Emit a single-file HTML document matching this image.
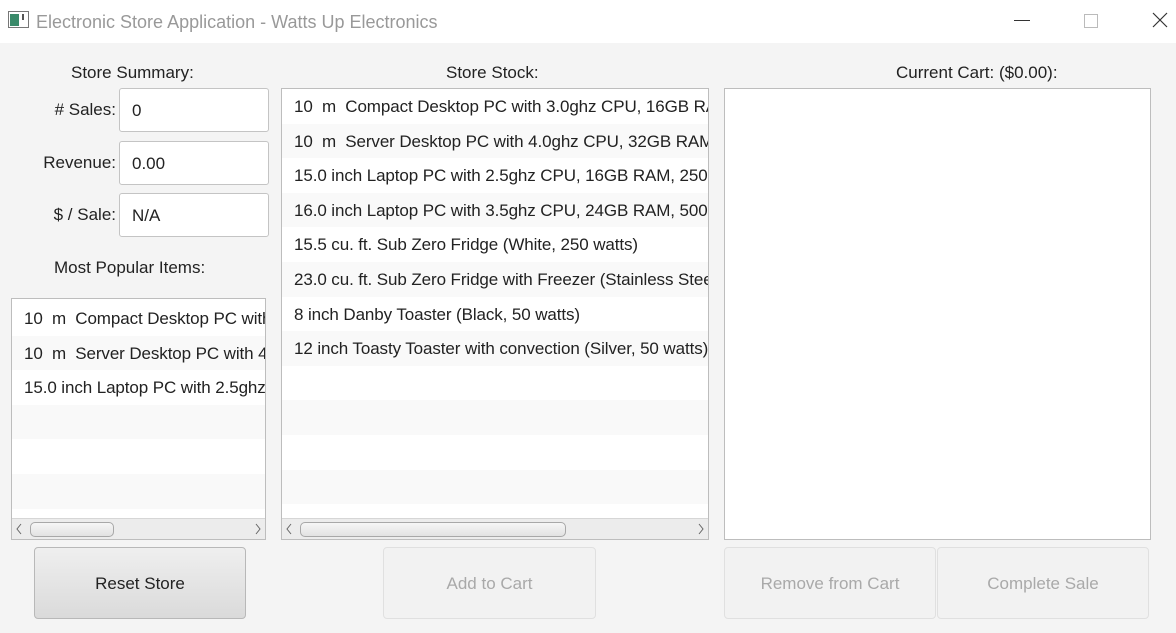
<!DOCTYPE html><html><head><style>
body{margin:0;width:1176px;height:633px;background:#f4f4f4;font-family:"Liberation Sans",sans-serif;font-size:17px;color:#222;position:relative;overflow:hidden}
.a{position:absolute}
.tb{left:0;top:0;width:1176px;height:43px;background:#fff}
.lbl{text-align:right;width:116px;left:0}
.tf{background:#fff;border:1px solid #c4c4c4;border-radius:3px;width:150px;height:44px;left:119px;box-sizing:border-box;padding:12px 0 0 12px}
.list{background:#fff;border:1px solid #bdbdbd;box-sizing:border-box;overflow:hidden}
.row{height:34.6px;line-height:36px;padding-left:12px;white-space:nowrap;letter-spacing:-0.1px}
.row:nth-child(even){background:#f9f9f9}
.sb{position:absolute;left:0;right:0;bottom:0;height:20px;background:#ececec;border-top:1px solid #d6d6d6}
.thumb{position:absolute;top:3px;height:13px;border:1px solid #a8a8a8;border-radius:5px;background:linear-gradient(#f6f6f6,#e2e2e2)}
.btn{border:1px solid #b8b8b8;border-radius:4px;box-sizing:border-box;text-align:center;line-height:72px;background:linear-gradient(#efefef,#dadada)}
.dis{border-color:#e0e0e0;background:#f2f2f2;color:#a9a9a9}
</style></head><body>
<div class="a tb"></div>
<svg class="a" style="left:8px;top:11px" width="22" height="18"><rect x="0.5" y="0.5" width="20" height="16" fill="#fff" stroke="#777"/><rect x="2" y="3" width="9" height="12" fill="#3a8a6a"/><rect x="14" y="3" width="2" height="6" fill="#555"/></svg>
<div class="a" style="left:36px;top:12px;color:#999;font-size:18px">Electronic Store Application - Watts Up Electronics</div>
<div class="a" style="left:1014px;top:20px;width:16px;height:1px;background:#333"></div>
<div class="a" style="left:1084px;top:14px;width:12px;height:12px;border:1px solid #bbb"></div>
<svg class="a" style="left:1152px;top:12px" width="16" height="16"><path d="M1 1L15 15M15 1L1 15" stroke="#333" stroke-width="1.2"/></svg>

<div class="a" style="left:71px;top:63px">Store Summary:</div>
<div class="a lbl" style="top:100px"># Sales:</div><div class="a tf" style="top:88px">0</div>
<div class="a lbl" style="top:153px">Revenue:</div><div class="a tf" style="top:141px">0.00</div>
<div class="a lbl" style="top:205px">$ / Sale:</div><div class="a tf" style="top:193px">N/A</div>
<div class="a" style="left:54px;top:258px">Most Popular Items:</div>
<div class="a list" style="left:11px;top:298px;width:255px;height:242px"><div style="padding-top:2px">
<div class="row">10&nbsp; m&nbsp; Compact Desktop PC with 3.0ghz</div><div class="row">10&nbsp; m&nbsp; Server Desktop PC with 4.0ghz</div><div class="row">15.0 inch Laptop PC with 2.5ghz CPU</div><div class="row"></div><div class="row"></div><div class="row"></div></div>
<div class="sb"><svg class="a" style="left:3px;top:4px" width="8" height="12"><path d="M6 1L2 6L6 11" stroke="#666" fill="none"/></svg><div class="thumb" style="left:18px;width:82px"></div><svg class="a" style="right:3px;top:4px" width="8" height="12"><path d="M2 1L6 6L2 11" stroke="#666" fill="none"/></svg></div></div>

<div class="a" style="left:446px;top:63px">Store Stock:</div>
<div class="a list" style="left:281px;top:88px;width:428px;height:452px"><div>
<div class="row">10&nbsp; m&nbsp; Compact Desktop PC with 3.0ghz CPU, 16GB RAM</div><div class="row">10&nbsp; m&nbsp; Server Desktop PC with 4.0ghz CPU, 32GB RAM</div><div class="row">15.0 inch Laptop PC with 2.5ghz CPU, 16GB RAM, 250GB</div><div class="row">16.0 inch Laptop PC with 3.5ghz CPU, 24GB RAM, 500GB</div><div class="row">15.5 cu. ft. Sub Zero Fridge (White, 250 watts)</div><div class="row">23.0 cu. ft. Sub Zero Fridge with Freezer (Stainless Steel)</div><div class="row">8 inch Danby Toaster (Black, 50 watts)</div><div class="row">12 inch Toasty Toaster with convection (Silver, 50 watts)</div><div class="row"></div><div class="row"></div><div class="row"></div><div class="row"></div><div class="row"></div></div>
<div class="sb"><svg class="a" style="left:3px;top:4px" width="8" height="12"><path d="M6 1L2 6L6 11" stroke="#666" fill="none"/></svg><div class="thumb" style="left:18px;width:264px"></div><svg class="a" style="right:3px;top:4px" width="8" height="12"><path d="M2 1L6 6L2 11" stroke="#666" fill="none"/></svg></div></div>

<div class="a" style="left:896px;top:63px">Current Cart: ($0.00):</div>
<div class="a list" style="left:724px;top:88px;width:427px;height:452px"></div>

<div class="a btn" style="left:34px;top:547px;width:212px;height:72px">Reset Store</div>
<div class="a btn dis" style="left:383px;top:547px;width:213px;height:72px">Add to Cart</div>
<div class="a btn dis" style="left:724px;top:547px;width:212px;height:72px">Remove from Cart</div>
<div class="a btn dis" style="left:937px;top:547px;width:212px;height:72px">Complete Sale</div>
</body></html>
